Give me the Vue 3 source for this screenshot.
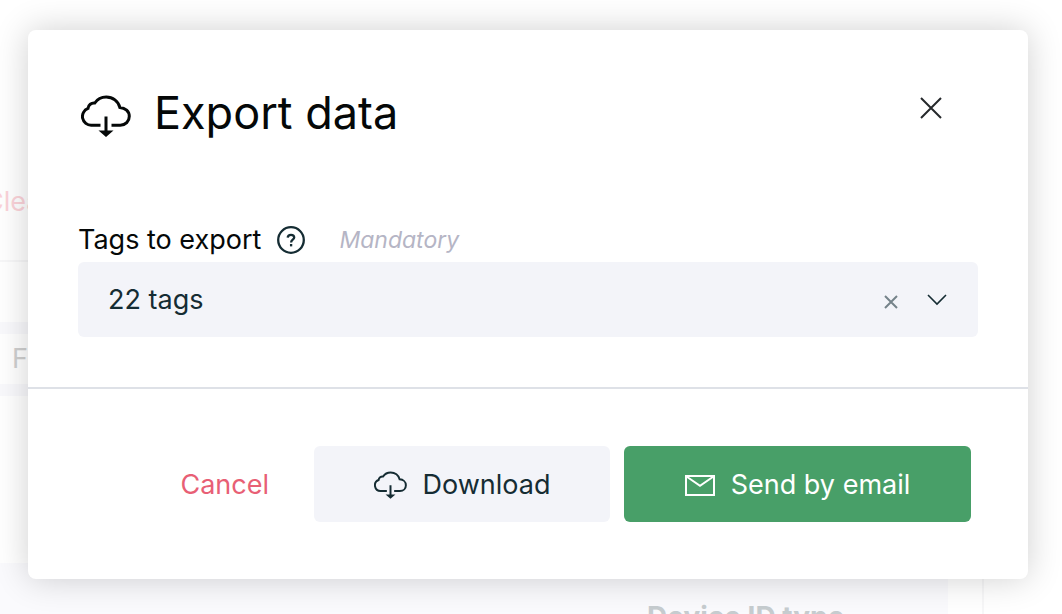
<script setup>
import { ref } from 'vue'

const open = ref(true)
const tags = ref('22')
</script>

<template>
  <div class="screen">
    <div class="page" aria-hidden="true">
      <div class="toolbar"><span class="clear-filters">Clear</span></div>
      <div class="spacer"></div>
      <div class="band"></div>
      <div class="filter">F</div>
      <div class="band"></div>
      <div class="blank"></div>
      <div class="panel">
        <div class="panel-main"><span class="panel-title">Device ID type</span></div>
        <div class="panel-side"></div>
      </div>
    </div>

    <div class="overlay">
      <section v-if="open" class="modal" role="dialog" aria-modal="true" aria-labelledby="export-title">
        <header class="head">
          <svg class="title-icon" viewBox="0 0 50 42" aria-hidden="true">
            <path d="M19.5 30.2H10.5A8.7 8.7 0 0 1 7 13.4C7.4 9.8 10.3 7.6 13.8 8C16.3 4.2 20.5 2 25.2 2C31.8 2 37.3 6.300 38.800 12.400C44.300 12.700 48.300 16.500 48.300 21.300C48.300 26.400 44.500 30.200 39.300 30.200H30.500" fill="none" stroke="currentColor" stroke-width="3" />
            <path d="M23.500 21.500h3v14h6L25 42l-7.500-6.500h6z" fill="currentColor" />
          </svg>
          <h1 id="export-title">Export data</h1>
          <button class="close" type="button" aria-label="Close" @click="open = false">
            <svg viewBox="0 0 22 22" aria-hidden="true"><path d="M1 1l20 20M21 1L1 21" /></svg>
          </button>
        </header>

        <div class="body">
          <div class="label-row">
            <label for="tags">Tags to export</label>
            <button class="help" type="button" aria-label="Help">
              <svg viewBox="0 0 28 28" aria-hidden="true">
                <circle cx="14" cy="14" r="12.800" />
                <path d="M10.700 11.600C10.800 9.800 12.100 8.800 14 8.800C15.900 8.800 17.200 9.900 17.200 11.500C17.200 13.700 14.100 13.800 14.100 16.400" />
                <path d="M14.100 18v2.400" />
              </svg>
            </button>
            <span class="hint">Mandatory</span>
          </div>
          <div class="field">
            <select id="tags" v-model="tags">
              <option value="22">22 tags</option>
              <option value=""></option>
            </select>
            <button class="clear" type="button" aria-label="Clear tags" @click="tags = ''">
              <svg viewBox="0 0 14 14" aria-hidden="true"><path d="M1 1l12 12M13 1L1 13" /></svg>
            </button>
            <svg class="chevron" viewBox="0 0 20 12" aria-hidden="true"><path d="M1 1l9 9 9-9" /></svg>
          </div>
        </div>

        <footer class="foot">
          <button class="cancel" type="button" @click="open = false">Cancel</button>
          <button class="action download" type="button">
            <svg class="cloud" viewBox="0 0 50 42" aria-hidden="true">
              <path d="M19.500 30.200H10.500A8.700 8.700 0 0 1 7 13.400C7.400 9.800 10.300 7.600 13.800 8C16.300 4.200 20.500 2 25.200 2C31.800 2 37.300 6.300 38.800 12.400C44.300 12.700 48.300 16.500 48.300 21.300C48.300 26.400 44.500 30.200 39.300 30.200H30.500" fill="none" stroke="currentColor" stroke-width="3" />
              <path d="M23.500 21.500h3v14h6L25 42l-7.500-6.500h6z" fill="currentColor" />
            </svg>
            <span>Download</span>
          </button>
          <button class="action send" type="button">
            <svg class="mail" viewBox="0 0 30 21" aria-hidden="true">
              <path d="M1 1h28v19H1zM1.500 1.500L15 10.800 28.500 1.500" fill="none" stroke="currentColor" stroke-width="2" />
            </svg>
            <span>Send by email</span>
          </button>
        </footer>
      </section>
    </div>
  </div>
</template>

<style>
body {
  margin: 0;
  background: #fff;
}
</style>

<style scoped>
.screen {
  position: relative;
  min-height: 100vh;
  overflow: hidden;
  font-family: Inter, Roboto, "Liberation Sans", sans-serif;
  font-size: 27px;
  line-height: 34px;
  color: #152c33;
}

.page {
  position: absolute;
  inset: 0;
  overflow: hidden;
  display: flex;
  flex-direction: column;
}

.page > * {
  flex: none;
}

.toolbar,
.band {
  margin-right: 78px;
}

.toolbar {
  box-sizing: border-box;
  height: 262px;
  padding-top: 185px;
  border-bottom: 2px solid #f7f7f8;
}

.clear-filters {
  margin-left: -16px;
  color: #fbd3d9;
}

.spacer {
  height: 60px;
}

.band {
  height: 12px;
  background: #f9f9fc;
}

.filter {
  height: 50px;
  padding-left: 12px;
  font-size: 27px;
  line-height: 50px;
  color: #cfcfcf;
}

.blank {
  height: 167px;
}

.page > .panel {
  flex: 1;
  display: flex;
}

.panel-main {
  flex: 1;
  padding: 37px 0 0 647px;
  background: #fafafd;
  white-space: nowrap;
}

.panel-title {
  font-size: 28px;
  font-weight: 700;
  color: #c6cccf;
}

.panel-side {
  flex: 0 0 34px;
  margin-right: 78px;
  border-right: 2px solid #f7f7f8;
}

.overlay {
  position: relative;
  padding: 30px 34px 35px 28px;
}

.modal {
  border-radius: 8px;
  background: #fff;
  box-shadow: 0 0 34px rgba(0, 0, 0, 0.19);
}

button {
  margin: 0;
  padding: 0;
  border: 0;
  background: none;
  color: inherit;
  font: inherit;
  cursor: pointer;
}

svg {
  display: block;
  flex: none;
}

.head {
  display: flex;
  align-items: center;
  padding: 55px 85px 0 53px;
  color: #050808;
}

.title-icon {
  width: 50px;
  height: 42px;
  margin-top: 6px;
}

h1 {
  margin: 0 auto 0 23px;
  font-size: 45px;
  line-height: 56px;
  font-weight: 400;
}

.close {
  padding: 1px;
  margin-bottom: 10px;
}

.close svg {
  width: 22px;
  height: 22px;
  fill: none;
  stroke: #25282b;
  stroke-width: 2;
}

.body {
  padding: 82px 50px 50px;
}

.label-row {
  display: flex;
  align-items: center;
  height: 34px;
  margin-bottom: 5px;
  color: #050808;
}

.help {
  margin: 0 34px 0 16px;
  color: #152c33;
}

.help svg {
  width: 28px;
  height: 28px;
  fill: none;
  stroke: currentColor;
  stroke-width: 2.300;
}

.hint {
  font-size: 23px;
  font-style: italic;
  color: #b5b5c5;
}

.field {
  display: flex;
  align-items: center;
  height: 75px;
  padding-right: 31px;
  border-radius: 6px;
  background: #f3f4f9;
}

select {
  flex: 1;
  min-width: 0;
  height: 100%;
  padding: 0 30px;
  border: 0;
  appearance: none;
  background: transparent;
  color: #152c33;
  font: inherit;
}

.clear {
  margin: 5px 29px 0 0;
}

.clear svg {
  width: 14px;
  height: 14px;
  fill: none;
  stroke: #75838a;
  stroke-width: 2;
}

.chevron {
  width: 20px;
  height: 12px;
  fill: none;
  stroke: #152c33;
  stroke-width: 1.600;
}

.foot {
  display: flex;
  justify-content: flex-end;
  align-items: center;
  padding: 57px;
  border-top: 2px solid #dee1e7;
}

.cancel {
  padding-top: 2px;
  margin-right: 45px;
  color: #e85f75;
}

.action {
  display: flex;
  align-items: center;
  justify-content: center;
  gap: 16px;
  height: 76px;
  padding-top: 2px;
  border-radius: 6px;
  white-space: nowrap;
}

.download {
  flex: 0 1 296px;
  margin-right: 14px;
  background: #f3f4f9;
}

.send {
  flex: 0 1 347px;
  background: #489f68;
  color: #fff;
}

.cloud {
  width: 33px;
  height: 28px;
}

.mail {
  width: 30px;
  height: 21px;
}
</style>
